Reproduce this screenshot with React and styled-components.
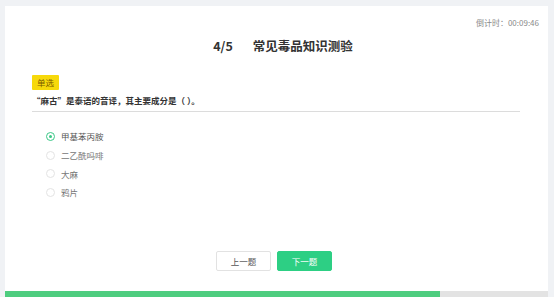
import React from "react";
import styled, { createGlobalStyle } from "styled-components";

const Global = createGlobalStyle`
  html, body { margin: 0; padding: 0; background: #f0f2f5; }
  body { font-family: "Noto Sans CJK SC", "Noto Sans", sans-serif; overflow: hidden; }
`;

const Page = styled.div`
  height: 297px;
  padding: 6px 6px 0 5px;
  box-sizing: border-box;
  display: flex;
`;

const Card = styled.div`
  flex: 1;
  background: #fff;
  display: flex;
  flex-direction: column;
`;

const Body = styled.div`
  flex: 1;
  padding: 0 28px 0 27px;
  display: flex;
  flex-direction: column;
`;

const TimerRow = styled.div`
  height: 22px;
  display: flex;
  justify-content: flex-end;
  align-items: flex-end;
  margin-right: -19px;
  font-size: 8px;
  color: #8a8a8a;
  line-height: 10px;
`;

const Title = styled.h1`
  margin: 6px 0 0;
  height: 22px;
  display: flex;
  justify-content: center;
  align-items: center;
  gap: 20px;
  font-size: 12.5px;
  font-weight: 700;
  color: #333;
  padding-left: 14px;
`;

const Badge = styled.span`
  align-self: flex-start;
  margin-top: 19px;
  background: #f7d90b;
  color: #7a5a00;
  font-size: 8.5px;
  line-height: 15px;
  height: 15px;
  padding: 0 5px;
  border-radius: 1px;
`;

const Question = styled.div`
  margin-top: 3px;
  font-size: 8.5px;
  font-weight: 700;
  color: #333;
  line-height: 14px;
  padding-bottom: 4px;
  border-bottom: 1px solid #dcdcdc;
`;

const Options = styled.div`
  margin-top: 15px;
  padding-left: 14px;
  display: flex;
  flex-direction: column;
`;

const Option = styled.label`
  display: flex;
  align-items: center;
  gap: 6px;
  height: 18.7px;
  font-size: 8.5px;
  color: ${(p) => (p.$active ? "#555" : "#777")};
`;

const Radio = styled.span`
  width: 7px;
  height: 7px;
  border-radius: 50%;
  border: 1px solid ${(p) => (p.$checked ? "#3bc887" : "#e3e3e3")};
  display: flex;
  align-items: center;
  justify-content: center;
  &::after {
    content: "";
    width: 3px;
    height: 3px;
    border-radius: 50%;
    background: ${(p) => (p.$checked ? "#3bc887" : "transparent")};
  }
`;

const Buttons = styled.div`
  margin-top: auto;
  margin-bottom: 20px;
  display: flex;
  justify-content: center;
  gap: 6px;
  padding-right: 4px;
`;

const Button = styled.button`
  width: 55px;
  height: 20px;
  border-radius: 2px;
  font-family: inherit;
  font-size: 8.5px;
  cursor: pointer;
  border: 1px solid ${(p) => (p.$primary ? "#2dcf84" : "#e2e2e2")};
  background: ${(p) => (p.$primary ? "#2dcf84" : "#fff")};
  color: ${(p) => (p.$primary ? "#fff" : "#555")};
  padding: 0;
`;

const Progress = styled.div`
  height: 6px;
  background: #e3e3e3;
  display: flex;
`;

const Fill = styled.div`
  background: #4ecd7f;
  height: 100%;
`;

const options = ["甲基苯丙胺", "二乙酰吗啡", "大麻", "鸦片"];

export default function App() {
  return (
    <>
      <Global />
      <Page>
        <Card>
          <Body>
            <TimerRow>倒计时：00:09:46</TimerRow>
            <Title>
              <span>4/5</span>
              <span>常见毒品知识测验</span>
            </Title>
            <Badge>单选</Badge>
            <Question>“麻古”是泰语的音译，其主要成分是（ ）。</Question>
            <Options>
              {options.map((o, i) => (
                <Option key={o} $active={i === 0}>
                  <Radio $checked={i === 0} />
                  {o}
                </Option>
              ))}
            </Options>
            <Buttons>
              <Button>上一题</Button>
              <Button $primary>下一题</Button>
            </Buttons>
          </Body>
          <Progress>
            <Fill style={{ width: `${(435 / 543) * 100}%` }} />
          </Progress>
        </Card>
      </Page>
    </>
  );
}
